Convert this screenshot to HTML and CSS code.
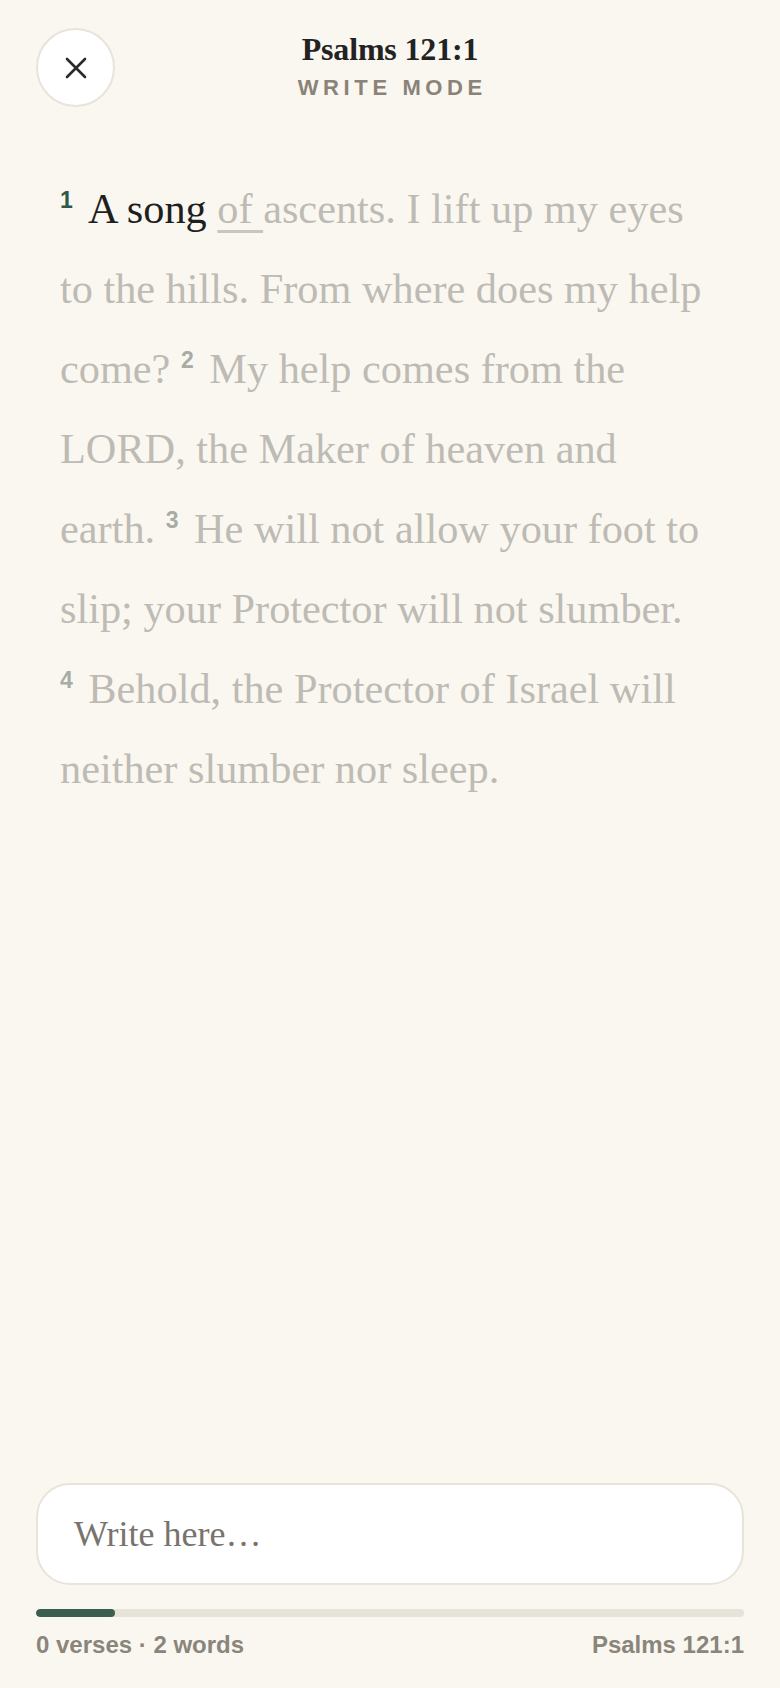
FILE: index.html
```html
<!DOCTYPE html>
<html lang="en">
<head>
<meta charset="utf-8">
<title>Psalms 121:1 – Write Mode</title>
<link rel="stylesheet" href="styles.css">
</head>
<body>
<div class="app">
  <header class="header">
    <button class="close-btn" aria-label="Close">
      <svg width="22" height="22" viewBox="0 0 22 22" fill="none" stroke="#2a2a2a" stroke-width="2.6" stroke-linecap="round">
        <path d="M2 2 L20 20 M20 2 L2 20"/>
      </svg>
    </button>
    <div class="title-block">
      <div class="title">Psalms 121:1</div>
      <div class="subtitle">WRITE MODE</div>
    </div>
    <div class="header-spacer"></div>
  </header>

  <main class="passage">
    <p class="verse-text"><sup class="vnum active">1</sup> <span class="typed">A song</span> <span class="current">of </span><span class="pending">ascents. I lift up my eyes to the hills. From where does my help come? <sup class="vnum">2</sup> My help comes from the LORD, the Maker of heaven and earth. <sup class="vnum">3</sup> He will not allow your foot to slip; your Protector will not slumber. <sup class="vnum">4</sup> Behold, the Protector of Israel will neither slumber nor sleep.</span></p>
  </main>

  <div class="spacer"></div>

  <footer class="composer">
    <div class="input-box">
      <span class="placeholder">Write here…</span>
    </div>
    <div class="progress">
      <div class="progress-fill" style="width: 11.1%"></div>
    </div>
    <div class="stats">
      <span>0 verses · 2 words</span>
      <span>Psalms 121:1</span>
    </div>
  </footer>
</div>
</body>
</html>
```

FILE: styles.css
```css
* {
  box-sizing: border-box;
}

html, body {
  margin: 0;
  padding: 0;
  background: #faf7f1;
}

.app {
  display: flex;
  flex-direction: column;
  min-height: 100vh;
  height: 1688px;
}

.header {
  display: grid;
  grid-template-columns: 79px 1fr 79px;
  align-items: start;
  padding: 28px 36px 0;
}

.close-btn {
  width: 79px;
  height: 79px;
  border-radius: 50%;
  background: #ffffff;
  border: 2px solid #e8e4db;
  display: flex;
  align-items: center;
  justify-content: center;
  padding: 0;
  margin: 0;
  cursor: pointer;
}

.title-block {
  display: flex;
  flex-direction: column;
  align-items: center;
  gap: 7px;
  padding-top: 2px;
}

.title {
  font-family: "Liberation Serif", "Times New Roman", serif;
  font-weight: 700;
  font-size: 32px;
  line-height: 38px;
  color: #222222;
  letter-spacing: -0.005em;
}

.subtitle {
  font-family: "Liberation Sans", Arial, sans-serif;
  font-weight: 700;
  font-size: 22px;
  line-height: 25px;
  letter-spacing: 0.21em;
  margin-right: -0.21em;
  color: #8a8378;
}

.passage {
  padding: 62px 60px 0;
}

.verse-text {
  margin: 0;
  max-width: 644px;
  font-family: "Liberation Serif", "Times New Roman", serif;
  font-size: 42.3px;
  line-height: 80px;
  color: #bdbbb4;
}

.typed {
  color: #1f1f1f;
}

.current {
  color: #bdbbb4;
  text-decoration: underline;
  text-decoration-color: #c6c8c0;
  text-decoration-thickness: 3px;
  text-underline-offset: 7px;
}

.pending {
  color: #bdbbb4;
}

.vnum {
  font-family: "Liberation Sans", Arial, sans-serif;
  font-weight: 700;
  font-size: 23px;
  line-height: 0;
  vertical-align: 15px;
  color: #a7aca5;
  margin-right: 5px;
}

.vnum.active {
  color: #2f5a49;
  margin-right: 7px;
}

.spacer {
  flex: 1;
}

.composer {
  padding: 0 36px 29px;
  display: flex;
  flex-direction: column;
}

.input-box {
  height: 102px;
  background: #ffffff;
  border: 2px solid #e8e4da;
  border-radius: 34px;
  display: flex;
  align-items: center;
  padding: 0 36px;
}

.placeholder {
  font-family: "Liberation Serif", "Times New Roman", serif;
  font-size: 36px;
  color: #77736d;
}

.progress {
  margin-top: 24px;
  height: 8px;
  border-radius: 4px;
  background: #e8e3d8;
  overflow: hidden;
}

.progress-fill {
  height: 100%;
  border-radius: 4px;
  background: #3c5e50;
}

.stats {
  margin-top: 14px;
  display: flex;
  justify-content: space-between;
  font-family: "Liberation Sans", Arial, sans-serif;
  font-weight: 700;
  font-size: 24px;
  line-height: 28px;
  color: #8a857b;
}
```
